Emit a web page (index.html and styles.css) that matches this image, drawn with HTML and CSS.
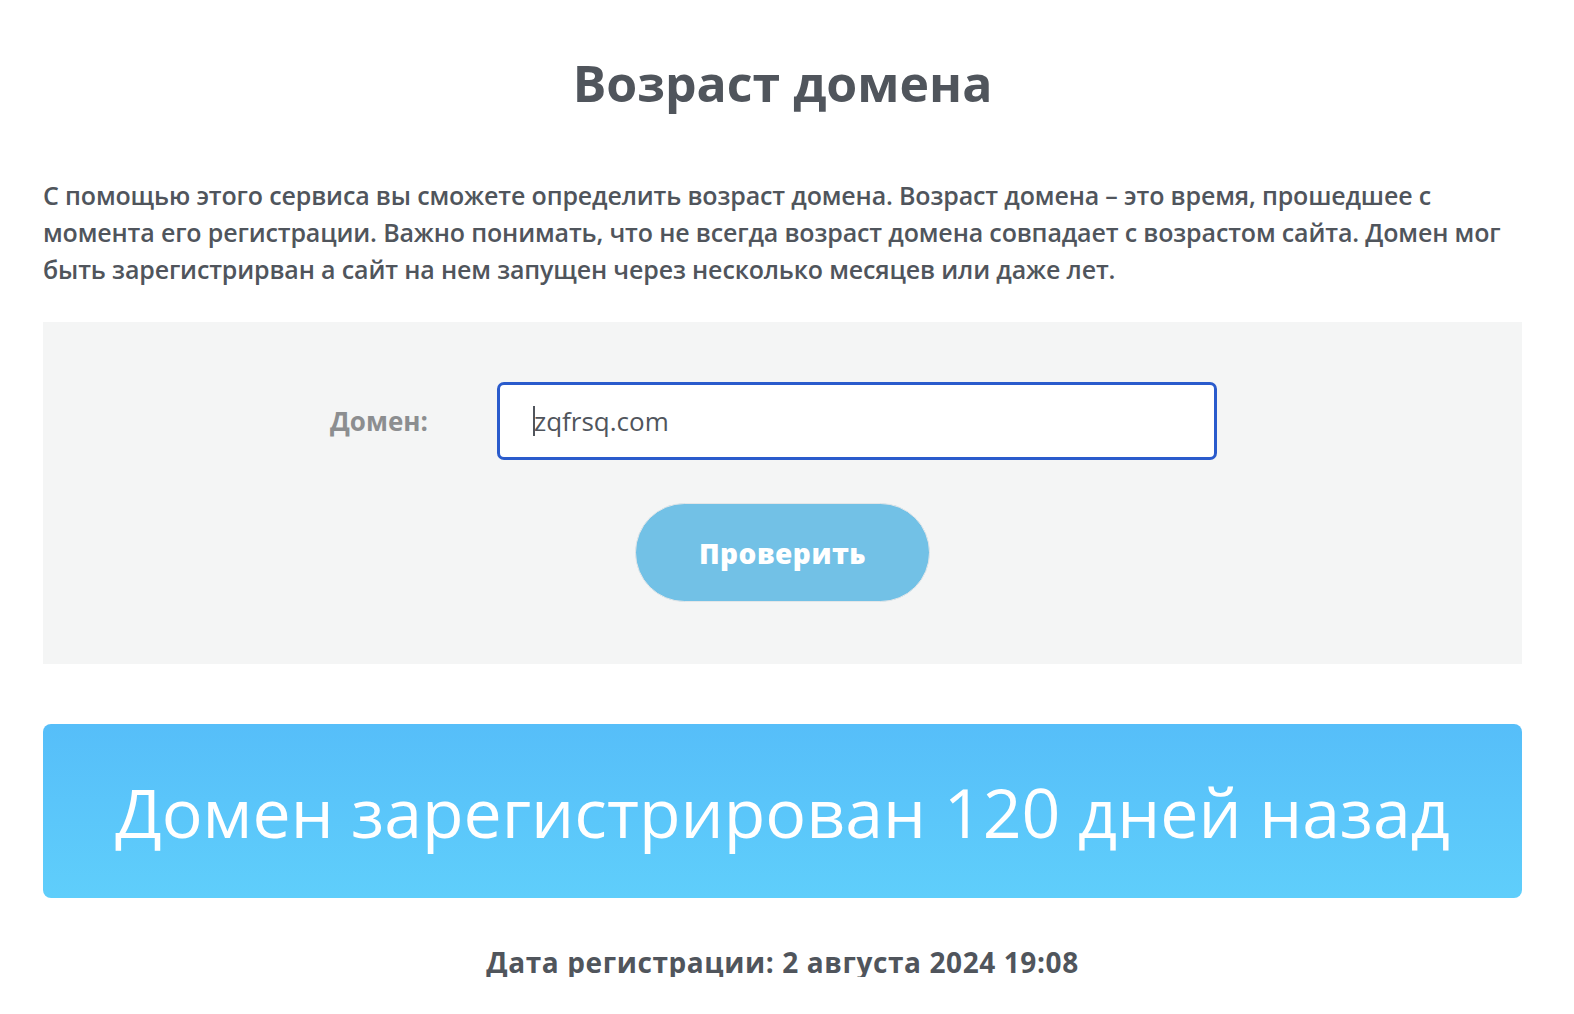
FILE: index.html
```html
<!DOCTYPE html>
<html lang="ru">
<head>
<meta charset="utf-8">
<title>Возраст домена</title>
<link rel="stylesheet" href="styles.css">
</head>
<body>
<main class="page">
  <h1 class="title">Возраст домена</h1>
  <p class="intro">С помощью этого сервиса вы сможете определить возраст домена. Возраст домена – это время, прошедшее с момента его регистрации. Важно понимать, что не всегда возраст домена совпадает с возрастом сайта. Домен мог быть зарегистрирван а сайт на нем запущен через несколько месяцев или даже лет.</p>
  <section class="panel">
    <div class="row">
      <label class="label" for="domain">Домен:</label>
      <div class="input" id="domain"><span class="caret"></span><span class="value">zqfrsq.com</span></div>
    </div>
    <button class="btn">Проверить</button>
  </section>
  <div class="result">Домен зарегистрирован 120 дней назад</div>
  <p class="date">Дата регистрации: 2 августа 2024 19:08</p>
</main>
</body>
</html>
```
FILE: styles.css
```css
html, body { margin: 0; padding: 0; background: #fff; overflow: hidden; }
body { font-family: "Open Sans", "Lato", sans-serif; color: #50555c; }
.page { width: 1479px; margin-left: 43px; padding-top: 51px; }
.title {
  margin: 0;
  text-align: center;
  font-family: "Open Sans", sans-serif;
  font-weight: 700;
  font-size: 50px;
  line-height: 64px;
  color: #50555c;
}
.intro {
  margin: 62px 0 0 0;
  font-size: 25px;
  line-height: 37px;
  font-weight: 600;
  letter-spacing: -0.15px;
  color: #50555c;
}
.panel {
  margin-top: 34px;
  background: #f4f5f5;
  height: 342px;
  box-sizing: border-box;
  padding-top: 60px;
  display: flex;
  flex-direction: column;
  align-items: center;
}
.row { display: flex; align-items: center; align-self: flex-start; margin-left: 287px; }
.label {
  width: 167px;
  font-weight: 700;
  font-size: 26px;
  color: #8c8e90;
}
.input {
  width: 720px;
  height: 78px;
  box-sizing: border-box;
  border: 3px solid #2a5bcc;
  border-radius: 7px;
  background: #fff;
  display: flex;
  align-items: center;
  padding-left: 33px;
  font-size: 26px;
  font-weight: 500;
  color: #50555c;
}
.caret { width: 2px; height: 30px; background: #50555c; margin-right: -1px; }
.btn {
  margin-top: 43px;
  width: 295px;
  height: 99px;
  border: 1px solid #e3e6e8;
  border-radius: 50px;
  background: #72c1e6;
  color: #fff;
  font-family: "Open Sans", sans-serif;
  font-weight: 800;
  font-size: 28px;
  letter-spacing: 0.5px;
  cursor: pointer;
}
.result {
  margin-top: 60px;
  height: 174px;
  border-radius: 8px;
  background: linear-gradient(to bottom, #56bef9, #5fcefb);
  color: #fff;
  display: flex;
  align-items: center;
  justify-content: center;
  font-weight: 400;
  font-size: 68px;
}
.date {
  margin: 49px 0 0 0;
  text-align: center;
  font-weight: 700;
  font-size: 28px;
  letter-spacing: 0.6px;
  line-height: 30px;
  color: #50555c;
}
```
